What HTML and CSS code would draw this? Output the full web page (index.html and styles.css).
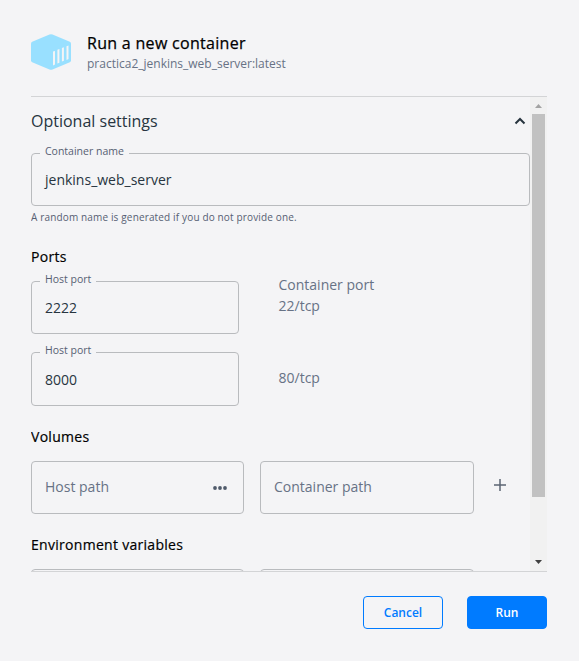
FILE: index.html
```html
<!DOCTYPE html>
<html lang="en">
<head>
<meta charset="utf-8">
<title>Run a new container</title>
<link rel="stylesheet" href="styles.css">
</head>
<body>
<main class="dialog">
  <header class="header">
    <svg class="logo" width="40" height="36" viewBox="0 0 40 36">
      <path d="M18.5.5Q20-.1 21.500.5L38.800 7.800Q40 8.400 40 9.800V26.200Q40 27.600 38.800 28.200L21.500 35.500Q20 36.100 18.500 35.500L1.200 28.200Q0 27.600 0 26.200V9.800Q0 8.400 1.200 7.800Z" fill="#99e0ff"/>
      <path d="M22 17.600l2-.7v13.700l-2 .8zM26.400 15.800l2-.8v13.700l-2 .8zM30.900 14l2-.8v13.500l-2 .8zM35.500 12.200l2-.8v13.700l-2 .8z" fill="#f4f4f6"/>
    </svg>
    <div class="heading">
      <h1 class="title">Run a new container</h1>
      <p class="subtitle">practica2_jenkins_web_server:latest</p>
    </div>
  </header>
  <section class="body">
    <div class="content">
      <div class="toggle">
        <h2 class="toggle-title">Optional settings</h2>
        <svg class="chevron" width="12" height="8" viewBox="0 0 12 8"><path d="M1.500 6.500L6 2l4.500 4.500" fill="none" stroke="#27343f" stroke-width="2"/></svg>
      </div>
      <div class="field"><span class="label">Container name</span><span class="value">jenkins_web_server</span></div>
      <p class="helper">A random name is generated if you do not provide one.</p>
      <h3 class="section ports-title">Ports</h3>
      <div class="ports">
        <div class="field"><span class="label">Host port</span><span class="value">2222</span></div>
        <div class="port-info">Container port<br>22/tcp</div>
      </div>
      <div class="ports ports-second">
        <div class="field field-tall"><span class="label">Host port</span><span class="value">8000</span></div>
        <div class="port-info port-single">80/tcp</div>
      </div>
      <h3 class="section volumes-title">Volumes</h3>
      <div class="pair">
        <div class="field"><span class="placeholder">Host path</span>
          <svg class="dots" width="14" height="4" viewBox="0 0 14 4" fill="#505b6b"><circle cx="2" cy="2" r="1.900"/><circle cx="7" cy="2" r="1.900"/><circle cx="12" cy="2" r="1.900"/></svg>
        </div>
        <div class="field"><span class="placeholder">Container path</span></div>
        <svg class="plus" width="12" height="12" viewBox="0 0 12 12"><path d="M6 0v12M0 6h12" stroke="#5b6473" stroke-width="1.500"/></svg>
      </div>
      <h3 class="section env-title">Environment variables</h3>
      <div class="pair">
        <div class="field"></div>
        <div class="field"></div>
      </div>
    </div>
    <div class="scrollbar">
      <svg class="arrow" width="7" height="4" viewBox="0 0 7 4"><path d="M0 4L3.500 0L7 4z" fill="#a3a3a3"/></svg>
      <div class="thumb"></div>
      <svg class="arrow arrow-down" width="9" height="5" viewBox="0 0 9 5"><path d="M1 0L4.500 4L8 0z" fill="#404040"/></svg>
    </div>
  </section>
  <footer class="footer">
    <button class="button">Cancel</button>
    <button class="button primary">Run</button>
  </footer>
</main>
</body>
</html>
```
FILE: styles.css
```css
* { box-sizing: border-box; margin: 0; }
body {
  background: #f4f4f6;
  color: #27343f;
  font-family: "Open Sans", sans-serif;
  font-size: 14px;
  line-height: 21px;
}
.dialog { height: 661px; padding: 0 32px 0 31px; overflow: hidden; }
.header { display: flex; height: 97px; padding-top: 34px; border-bottom: 1px solid #d3d4d6; }
.logo { margin-right: 16px; }
.title {
  color: #000;
  font-size: 16px;
  font-weight: 500;
  line-height: 20px;
  letter-spacing: 0.3px;
  margin-top: -1px;
  -webkit-text-stroke: 0.25px #000;
}
.subtitle { color: #677285; font-size: 12px; line-height: 20px; margin-top: 1px; }
.body { display: flex; height: 475px; border-bottom: 1px solid #d3d4d6; overflow: hidden; }
.content { width: 499px; flex: none; }
.toggle { display: flex; justify-content: space-between; height: 56px; padding: 12px 4px 0 0; }
.toggle-title { font-size: 16px; font-weight: 400; line-height: 24px; }
.chevron { margin-top: 8px; }
.field {
  position: relative;
  display: flex;
  align-items: center;
  justify-content: space-between;
  height: 53px;
  padding: 0 13px;
  border: 1px solid #b9bbbe;
  border-radius: 4px;
}
.field-tall { height: 54px; }
.label {
  position: absolute;
  left: 8px;
  top: -12px;
  padding: 0 5px;
  background: #f4f4f6;
  color: #566073;
  font-size: 10.5px;
  line-height: 18px;
}
.placeholder, .port-info { color: #677285; }
.placeholder { padding-bottom: 2px; }
.helper { color: #566073; font-size: 10px; line-height: 14px; letter-spacing: 0.15px; margin-top: 4px; }
.section {
  color: #000;
  font-size: 14px;
  font-weight: 500;
  line-height: 20px;
  letter-spacing: 0.29px;
  -webkit-text-stroke: 0.2px #000;
}
.ports-title { margin-top: 23px; margin-bottom: 14px; }
.ports { display: grid; grid-template-columns: 208px 1fr; column-gap: 39.500px; }
.ports-second { margin-top: 18px; }
.port-info { margin-top: -7px; }
.port-single { margin-top: 15px; }
.volumes-title { margin-top: 21px; margin-bottom: 14px; }
.pair { display: grid; grid-template-columns: 213px 214px 12px; column-gap: 16px; }
.dots { margin-right: 3px; }
.plus { margin: 18px 0 0 4px; }
.env-title { margin-top: 21px; margin-bottom: 14px; }
.scrollbar {
  display: flex;
  flex-direction: column;
  align-items: center;
  width: 17px;
  padding: 7px 0 6px;
  background: #f1f1f1;
}
.thumb { width: 13px; height: 383px; margin-top: 6px; background: #c1c1c1; }
.arrow { flex: none; }
.arrow-down { margin-top: auto; }
.footer { display: flex; justify-content: flex-end; gap: 24px; padding-top: 24px; }
.button {
  width: 80px;
  height: 33px;
  border: 1px solid #007bff;
  border-radius: 4px;
  background: transparent;
  color: #007bff;
  font-family: inherit;
  font-size: 12px;
  font-weight: 600;
}
.primary { background: #007bff; color: #fff; }
```
